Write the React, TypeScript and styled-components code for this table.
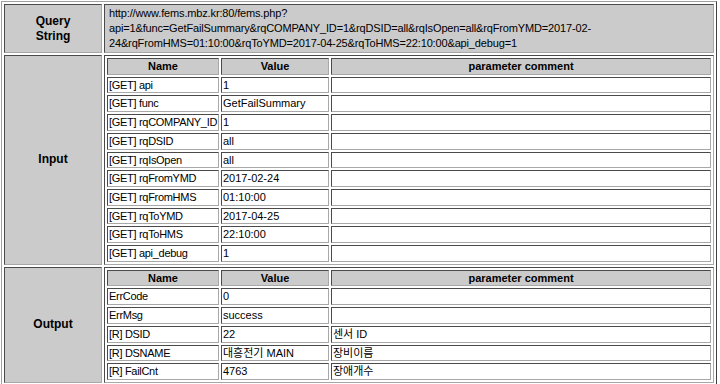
import React from 'react';
import styled, { createGlobalStyle } from 'styled-components';

interface IParam {
  name: string;
  value: string;
  comment?: string;
}

const inputParams: IParam[] = [
  { name: '[GET] api', value: '1' },
  { name: '[GET] func', value: 'GetFailSummary' },
  { name: '[GET] rqCOMPANY_ID', value: '1' },
  { name: '[GET] rqDSID', value: 'all' },
  { name: '[GET] rqIsOpen', value: 'all' },
  { name: '[GET] rqFromYMD', value: '2017-02-24' },
  { name: '[GET] rqFromHMS', value: '01:10:00' },
  { name: '[GET] rqToYMD', value: '2017-04-25' },
  { name: '[GET] rqToHMS', value: '22:10:00' },
  { name: '[GET] api_debug', value: '1' },
];

const outputParams: IParam[] = [
  { name: 'ErrCode', value: '0' },
  { name: 'ErrMsg', value: 'success' },
  { name: '[R] DSID', value: '22', comment: '센서 ID' },
  { name: '[R] DSNAME', value: '대흥전기 MAIN', comment: '장비이름' },
  { name: '[R] FailCnt', value: '4763', comment: '장애개수' },
];

const ParamTable = ({ rows }: { rows: IParam[] }) => (
  <InnerTable>
    <colgroup>
      <col style={{ width: 112 }} />
      <col style={{ width: 108 }} />
      <col />
    </colgroup>
    <tbody>
      <tr>
        <HeadCell>Name</HeadCell>
        <HeadCell>Value</HeadCell>
        <HeadCell>parameter comment</HeadCell>
      </tr>
      {rows.map(r => (
        <tr key={r.name}>
          <DataCell $tight>{r.name}</DataCell>
          <DataCell>{r.value}</DataCell>
          <DataCell>{r.comment || ''}</DataCell>
        </tr>
      ))}
    </tbody>
  </InnerTable>
);

const App = () => {
  return (
    <>
      <GlobalStyle />
      <OuterTable>
        <tbody>
          <tr>
            <LabelCell>
              Query
              <br />
              String
            </LabelCell>
            <QueryCell>
              http://www.fems.mbz.kr:80/fems.php?
              <br />
              api=1&amp;func=GetFailSummary&amp;rqCOMPANY_ID=1&amp;rqDSID=all&amp;rqIsOpen=all&amp;rqFromYMD=2017-02-
              <br />
              24&amp;rqFromHMS=01:10:00&amp;rqToYMD=2017-04-25&amp;rqToHMS=22:10:00&amp;api_debug=1
            </QueryCell>
          </tr>
          <tr>
            <LabelCell>Input</LabelCell>
            <NestCell>
              <ParamTable rows={inputParams} />
            </NestCell>
          </tr>
          <tr>
            <LabelCell>Output</LabelCell>
            <NestCell>
              <ParamTable rows={outputParams} />
            </NestCell>
          </tr>
        </tbody>
      </OuterTable>
    </>
  );
};

const GlobalStyle = createGlobalStyle`
  html, body {
    margin: 0;
    padding: 0;
    background: #ffffff;
    overflow: hidden;
  }
  body {
    font-family: "Liberation Sans", "Noto Sans CJK KR", sans-serif;
    font-size: 11px;
    color: #000000;
  }
  * {
    box-sizing: border-box;
  }
`;

const OuterTable = styled.table`
  margin: 1px 0 0 1px;
  width: 716px;
  border-collapse: separate;
  border-spacing: 2px;
  border: 1px solid;
  border-color: #a0a0a0 #404040 #404040 #a0a0a0;
  table-layout: fixed;
`;

const Cell = styled.td`
  border: 1px solid;
  border-color: #4a4a4a #a8a8a8 #a8a8a8 #4a4a4a;
`;

const LabelCell = styled(Cell)`
  width: 98px;
  background: #cbcbcb;
  font-size: 12px;
  font-weight: bold;
  text-align: center;
  vertical-align: middle;
  line-height: 15px;
  padding: 1px;
`;

const QueryCell = styled(Cell)`
  background: #cbcbcb;
  line-height: 15px;
  letter-spacing: -0.15px;
  padding: 1px 4px;
  white-space: nowrap;
  overflow: hidden;
`;

const NestCell = styled(Cell)`
  padding: 0;
`;

const InnerTable = styled.table`
  width: 100%;
  border-collapse: separate;
  border-spacing: 2px;
  table-layout: fixed;
`;

const HeadCell = styled(Cell).attrs({ as: 'th' })`
  background: #cbcbcb;
  font-weight: bold;
  text-align: center;
  height: 16.7px;
  line-height: 14.7px;
  padding: 0 1px;
`;

const DataCell = styled(Cell)<{ $tight?: boolean }>`
  background: #ffffff;
  height: 16.7px;
  line-height: 14.7px;
  padding: 0 1px;
  letter-spacing: ${p => (p.$tight ? '-0.3px' : 'normal')};
  white-space: nowrap;
  overflow: hidden;
`;

export default App;
